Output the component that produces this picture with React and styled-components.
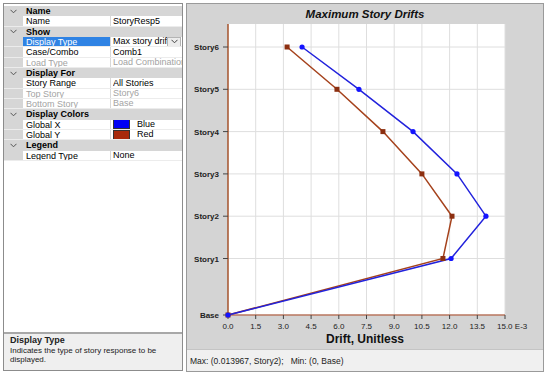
import { styled, createGlobalStyle } from "styled-components";

const GlobalStyle = createGlobalStyle`
  html, body {
    margin: 0;
    padding: 0;
    background: #ffffff;
  }
  body {
    font-family: "Liberation Sans", Arial, sans-serif;
    color: #000;
  }
`;

const Screen = styled.div`
  display: flex;
  gap: 3px;
  padding: 3px 0 0 3px;
  width: 550px;
  height: 377px;
  box-sizing: border-box;
`;

/* ---------- property panel ---------- */

const PropPanel = styled.div`
  width: 180px;
  height: 368px;
  box-sizing: border-box;
  border: 1px solid #8c8c8c;
  display: flex;
  flex-direction: column;
  background: #fff;
`;

const Grid = styled.div`
  flex: 1;
  padding-top: 2px;
  font-size: 9px;
`;

const Row = styled.div`
  display: grid;
  grid-template-columns: 19px 88px 1fr;
  height: 10.33px;
  line-height: 10.33px;
  box-sizing: border-box;
  background: ${(p) => (p.$header ? "#d6d6d6" : "#fff")};
  font-weight: ${(p) => (p.$header ? 700 : 400)};
  border-bottom: 1px solid ${(p) => (p.$header ? "#d6d6d6" : "#ececec")};
`;

const Strip = styled.div`
  background: #d6d6d6;
  display: flex;
  align-items: center;
  justify-content: center;
`;

const HeaderLabel = styled.div`
  grid-column: 2 / 4;
  padding-left: 3px;
`;

const Label = styled.div`
  padding-left: 3px;
  white-space: nowrap;
  overflow: hidden;
  border-right: 1px solid #d8d8d8;
  background: ${(p) => (p.$selected ? "#2f83e4" : "transparent")};
  color: ${(p) => (p.$selected ? "#fff" : p.$disabled ? "#a3a3a3" : "#000")};
`;

const Value = styled.div`
  display: flex;
  align-items: center;
  padding-left: 2px;
  white-space: nowrap;
  overflow: hidden;
  color: ${(p) => (p.$disabled ? "#a3a3a3" : "#000")};
`;

const ValueText = styled.span`
  flex: 1;
  overflow: hidden;
`;

const DropButton = styled.span`
  width: 12px;
  height: 8px;
  margin-right: 1px;
  border: 1px solid #b4b4b4;
  background: #ececec;
  display: flex;
  align-items: center;
  justify-content: center;
`;

const Swatch = styled.span`
  width: 15px;
  height: 8px;
  border: 1px solid #333;
  background: ${(p) => p.$color};
  margin-right: 7px;
`;

const Description = styled.div`
  height: 38px;
  box-sizing: border-box;
  border-top: 2px solid #a8a8a8;
  background: #efefef;
  padding: 2px 6px 0 6px;
  font-size: 8px;
  line-height: 9px;
  color: #222;

  h4 {
    margin: 0 0 1px 0;
    font-size: 9px;
    font-weight: 700;
  }
  p {
    margin: 0;
    width: 166px;
  }
`;

/* ---------- chart panel ---------- */

const ChartPanel = styled.div`
  width: 358px;
  height: 369px;
  box-sizing: border-box;
  border: 1px solid #9a9a9a;
  display: flex;
  flex-direction: column;
`;

const ChartArea = styled.div`
  flex: 1;
  background: #d4d4d4;
  display: flex;
  flex-direction: column;
`;

const ChartTitle = styled.div`
  height: 20px;
  line-height: 20px;
  text-align: center;
  font-size: 11.5px;
  font-weight: 700;
  font-style: italic;
  color: #111;
`;

const AxisTitle = styled.div`
  height: 16px;
  line-height: 14px;
  text-align: center;
  font-size: 12px;
  font-weight: 700;
  color: #111;
`;

const StatusBar = styled.div`
  height: 22px;
  box-sizing: border-box;
  border-top: 1px solid #c4c4c4;
  background: #f0f0f0;
  display: flex;
  align-items: center;
  padding-left: 3px;
  font-size: 8.5px;
  color: #222;
  white-space: pre;
`;

function Chevron({ color = "#555" }) {
  return (
    <svg width="7" height="5" viewBox="0 0 7 5">
      <polyline points="0.5,0.8 3.5,3.8 6.5,0.8" fill="none" stroke={color} strokeWidth="1" />
    </svg>
  );
}

const rows = [
  { header: "Name" },
  { label: "Name", value: "StoryResp5" },
  { header: "Show" },
  { label: "Display Type", value: "Max story drifts", selected: true, drop: true },
  { label: "Case/Combo", value: "Comb1" },
  { label: "Load Type", value: "Load Combination", disabled: true },
  { header: "Display For" },
  { label: "Story Range", value: "All Stories" },
  { label: "Top Story", value: "Story6", disabled: true },
  { label: "Bottom Story", value: "Base", disabled: true },
  { header: "Display Colors" },
  { label: "Global X", value: "Blue", swatch: "#0000f4" },
  { label: "Global Y", value: "Red", swatch: "#a82a0c" },
  { header: "Legend" },
  { label: "Legend Type", value: "None" },
];

function PropertyGrid() {
  return (
    <Grid>
      {rows.map((r, i) =>
        r.header ? (
          <Row key={i} $header>
            <Strip>
              <Chevron />
            </Strip>
            <HeaderLabel>{r.header}</HeaderLabel>
          </Row>
        ) : (
          <Row key={i}>
            <Strip />
            <Label $selected={r.selected} $disabled={r.disabled}>
              {r.label}
            </Label>
            <Value $disabled={r.disabled}>
              {r.swatch && <Swatch $color={r.swatch} />}
              <ValueText>{r.value}</ValueText>
              {r.drop && (
                <DropButton>
                  <Chevron color="#444" />
                </DropButton>
              )}
            </Value>
          </Row>
        )
      )}
    </Grid>
  );
}

/* chart geometry (svg local coords) */
const X0 = 41;
const X1 = 318;
const BASE_Y = 291;
const PX_PER_UNIT = (X1 - X0) / 15;
const storyY = (k) => (k === 0 ? BASE_Y : 234.5 - (k - 1) * 42.3);
const xOf = (v) => X0 + v * PX_PER_UNIT;

const stories = ["Base", "Story1", "Story2", "Story3", "Story4", "Story5", "Story6"];
const driftX = [0, 12.08, 13.967, 12.4, 10.02, 7.09, 4.01];
const driftY = [0, 11.64, 12.13, 10.5, 8.39, 5.9, 3.2];
const ticks = [0, 1.5, 3, 4.5, 6, 7.5, 9, 10.5, 12, 13.5, 15];

function DriftChart() {
  const blue = driftX.map((v, k) => `${xOf(v)},${storyY(k)}`).join(" ");
  const red = driftY.map((v, k) => `${xOf(v)},${storyY(k)}`).join(" ");

  return (
    <svg width="356" height="308" viewBox="0 0 356 308" style={{ display: "block" }}>
      <rect x={X0} y="0" width={X1 - X0} height={BASE_Y} fill="#fff" />
      {ticks.slice(1).map((t) => (
        <line key={t} x1={xOf(t)} y1="0" x2={xOf(t)} y2={BASE_Y} stroke="#dedede" strokeWidth="1" />
      ))}
      {stories.slice(1).map((s, k) => (
        <line key={s} x1={X0} y1={storyY(k + 1)} x2={X1} y2={storyY(k + 1)} stroke="#dedede" strokeWidth="1" />
      ))}

      {/* axes */}
      <line x1={X0} y1="0" x2={X0} y2={BASE_Y} stroke="#a4532c" strokeWidth="1.5" />
      <line x1={X0} y1={BASE_Y} x2={X1} y2={BASE_Y} stroke="#b8765e" strokeWidth="1.5" />
      {ticks.map((t) => (
        <line key={t} x1={xOf(t)} y1={BASE_Y} x2={xOf(t)} y2={BASE_Y + 4} stroke="#444" strokeWidth="1" />
      ))}
      {stories.map((s, k) => (
        <line key={s} x1={X0 - 5} y1={storyY(k)} x2={X0} y2={storyY(k)} stroke="#444" strokeWidth="1" />
      ))}

      {/* labels */}
      <g fontFamily="Liberation Sans, Arial, sans-serif" fontSize="8" fill="#222">
        {stories.map((s, k) => (
          <text key={s} x={X0 - 9} y={storyY(k) + 3} textAnchor="end" fontWeight="700">
            {s}
          </text>
        ))}
        {ticks.map((t, i) =>
          i === ticks.length - 1 ? (
            <text key={t} x={xOf(t) - 8} y="305">
              {t.toFixed(1)} E-3
            </text>
          ) : (
            <text key={t} x={xOf(t)} y="305" textAnchor="middle">
              {t.toFixed(1)}
            </text>
          )
        )}
      </g>

      {/* series */}
      <polyline points={red} fill="none" stroke="#a5421c" strokeWidth="1.5" />
      <polyline points={blue} fill="none" stroke="#2222dc" strokeWidth="1.5" />
      {driftY.map((v, k) => (
        <rect key={k} x={xOf(v) - 2.5} y={storyY(k) - 2.5} width="5" height="5" fill="#8c2f10" />
      ))}
      {driftX.map((v, k) => (
        <circle key={k} cx={xOf(v)} cy={storyY(k)} r="2.6" fill="#1414ff" />
      ))}
    </svg>
  );
}

export default function App() {
  return (
    <>
      <GlobalStyle />
      <Screen>
        <PropPanel>
          <PropertyGrid />
          <Description>
            <h4>Display Type</h4>
            <p>Indicates the type of story response to be displayed.</p>
          </Description>
        </PropPanel>
        <ChartPanel>
          <ChartArea>
            <ChartTitle>Maximum Story Drifts</ChartTitle>
            <DriftChart />
            <AxisTitle>Drift, Unitless</AxisTitle>
          </ChartArea>
          <StatusBar>{"Max: (0.013967, Story2);   Min: (0, Base)"}</StatusBar>
        </ChartPanel>
      </Screen>
    </>
  );
}
